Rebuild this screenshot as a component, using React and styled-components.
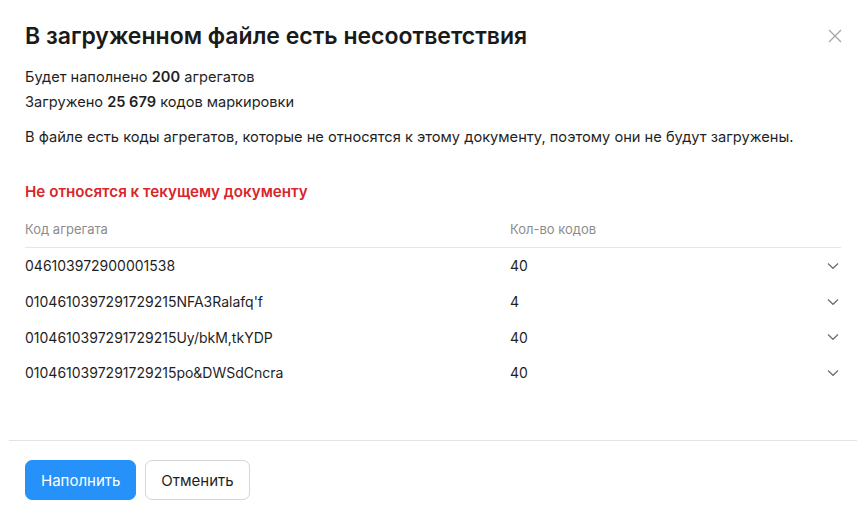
import React from "react";
import styled, { createGlobalStyle } from "styled-components";

const Global = createGlobalStyle`
  html, body { margin: 0; padding: 0; background: #fff; }
  body { font-family: Inter, "Noto Sans", sans-serif; color: #1f1f1f; -webkit-font-smoothing: antialiased; }
  * { box-sizing: border-box; }
`;

const Dialog = styled.div`
  width: 867px;
  height: 509px;
  padding: 0 10px 0 9px;
  display: flex;
  flex-direction: column;
`;

const Body = styled.div`
  padding: 20px 16px 0 16px;
  flex: 1;
  display: flex;
  flex-direction: column;
`;

const Header = styled.div`
  display: flex;
  align-items: center;
  justify-content: space-between;
  height: 32px;
`;

const Title = styled.h1`
  margin: 0;
  font-size: 23px;
  line-height: 32px;
  font-weight: 600;
  color: #1a1a1a;
`;

const Close = styled.button`
  border: 0;
  background: none;
  padding: 0;
  width: 20px;
  height: 20px;
  margin-right: -4px;
  display: flex;
  align-items: center;
  justify-content: center;
  color: #a6a6a6;
  cursor: pointer;
`;

const Stats = styled.div`
  margin-top: 13px;
  font-size: 14.6px;
  line-height: 25px;
  color: #1f1f1f;
  b { font-weight: 600; }
`;

const Text = styled.p`
  margin: 12px 0 0;
  font-size: 14.65px;
  line-height: 21px;
  color: #1f1f1f;
`;

const SectionTitle = styled.h2`
  margin: 33px 0 0;
  font-size: 15.2px;
  line-height: 21px;
  font-weight: 600;
  color: #d8262b;
`;

const Table = styled.div`
  margin-top: 17px;
  display: flex;
  flex-direction: column;
`;

const HeadRow = styled.div`
  display: grid;
  grid-template-columns: 485px 1fr 20px;
  height: 20px;
  align-items: center;
  font-size: 13px;
  color: #8c8c8c;
  border-bottom: 1px solid #e6e6e6;
  box-sizing: content-box;
  padding-bottom: 8px;
`;

const Row = styled.div`
  display: grid;
  grid-template-columns: 485px 1fr 20px;
  height: 35.7px;
  align-items: center;
  font-size: 14px;
  color: #1f1f1f;
`;

const Chevron = styled.span`
  display: flex;
  justify-content: flex-end;
  padding-right: 2px;
  color: #6e6e6e;
`;

const Footer = styled.div`
  border-top: 1px solid #e3e3e3;
  padding: 19px 16px 9px;
  display: flex;
  gap: 9px;
`;

const Button = styled.button`
  height: 40px;
  padding: 0 15px;
  border-radius: 7px;
  font-family: inherit;
  font-size: 15px;
  cursor: pointer;
  border: 1px solid ${(p) => (p.$primary ? "#2791fa" : "#d6d6d6")};
  background: ${(p) => (p.$primary ? "#2791fa" : "#fff")};
  color: ${(p) => (p.$primary ? "#fff" : "#1f1f1f")};
`;

const rows = [
  ["046103972900001538", "40"],
  ["0104610397291729215NFA3Ralafq'f", "4"],
  ["0104610397291729215Uy/bkM,tkYDP", "40"],
  ["0104610397291729215po&DWSdCncra", "40"],
];

const ChevronIcon = () => (
  <svg width="12" height="8" viewBox="0 0 12 8" fill="none">
    <path d="M1 1.5 L6 6.3 L11 1.5" stroke="currentColor" strokeWidth="1.2" />
  </svg>
);

export default function App() {
  return (
    <>
      <Global />
      <Dialog>
        <Body>
          <Header>
            <Title>В загруженном файле есть несоответствия</Title>
            <Close aria-label="Закрыть">
              <svg width="14" height="14" viewBox="0 0 14 14">
                <path d="M1 1 L13 13 M13 1 L1 13" stroke="currentColor" strokeWidth="1.3" />
              </svg>
            </Close>
          </Header>
          <Stats>
            <div>Будет наполнено <b>200</b> агрегатов</div>
            <div>Загружено <b>25 679</b> кодов маркировки</div>
          </Stats>
          <Text>
            В файле есть коды агрегатов, которые не относятся к этому документу, поэтому они не будут загружены.
          </Text>
          <SectionTitle>Не относятся к текущему документу</SectionTitle>
          <Table>
            <HeadRow>
              <span>Код агрегата</span>
              <span>Кол-во кодов</span>
              <span />
            </HeadRow>
            {rows.map(([code, count]) => (
              <Row key={code}>
                <span>{code}</span>
                <span>{count}</span>
                <Chevron><ChevronIcon /></Chevron>
              </Row>
            ))}
          </Table>
        </Body>
        <Footer>
          <Button $primary>Наполнить</Button>
          <Button>Отменить</Button>
        </Footer>
      </Dialog>
    </>
  );
}
